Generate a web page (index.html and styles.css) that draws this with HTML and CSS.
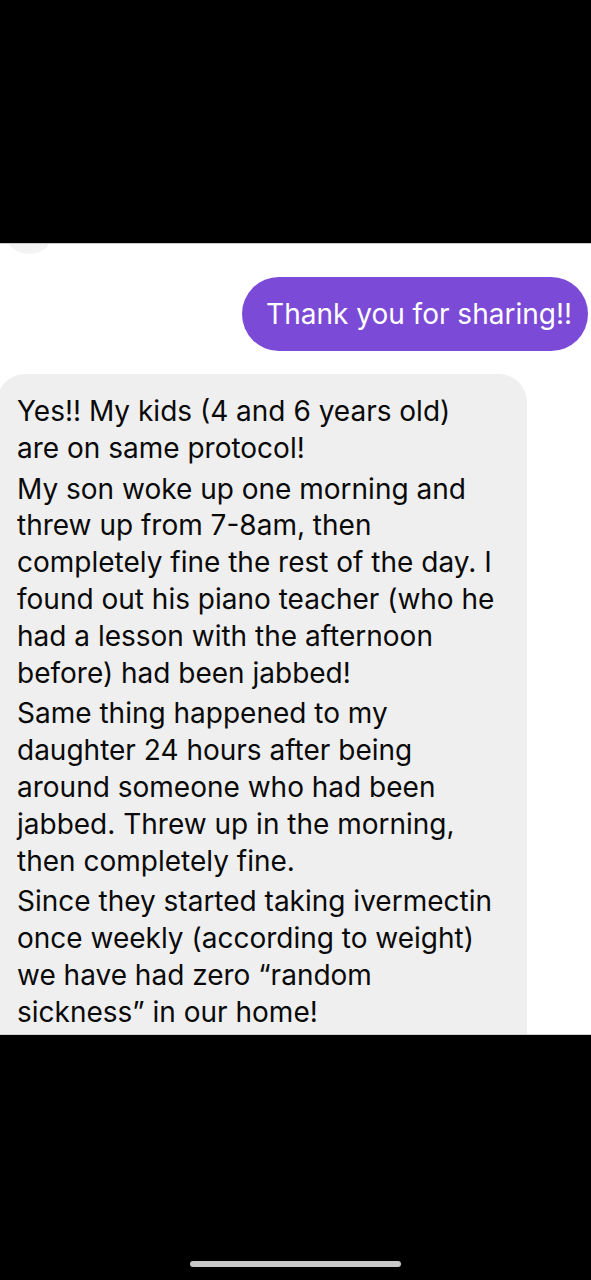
FILE: index.html
```html
<!DOCTYPE html>
<html>
<head>
<meta charset="utf-8">
<link rel="stylesheet" href="styles.css">
</head>
<body>
<div class="screen">
  <div class="top-black"></div>
  <div class="chat">
    <div class="prev-tail"></div>
    <div class="row row-out">
      <div class="bubble out">Thank you for sharing!!</div>
    </div>
    <div class="row row-in">
      <div class="bubble in">
        <p>Yes!! My kids (4 and 6 years old)<br>are on same protocol!</p>
        <p>My son woke up one morning and<br>threw up from 7-8am, then<br>completely fine the rest of the day. I<br>found out his piano teacher (who he<br>had a lesson with the afternoon<br>before) had been jabbed!</p>
        <p>Same thing happened to my<br>daughter 24 hours after being<br>around someone who had been<br>jabbed. Threw up in the morning,<br>then completely fine.</p>
        <p>Since they started taking ivermectin<br>once weekly (according to weight)<br>we have had zero “random<br>sickness” in our home!</p>
      </div>
    </div>
  </div>
  <div class="bottom-black">
    <div class="home-indicator"></div>
  </div>
</div>
</body>
</html>
```

FILE: styles.css
```css
html, body {
  margin: 0;
  padding: 0;
  background: #000;
}
.screen {
  width: 591px;
  height: 1280px;
  display: flex;
  flex-direction: column;
  overflow: hidden;
  font-family: Inter, "Liberation Sans", sans-serif;
}
.top-black {
  height: 243px;
  background: #000;
  flex: none;
}
.chat {
  height: 790px;
  flex: none;
  background: #fff;
  border-top: 1px solid #c8c8c8;
  border-bottom: 1px solid #d0d0d0;
  position: relative;
  overflow: hidden;
}
.prev-tail {
  position: absolute;
  left: 8px;
  top: -20px;
  width: 42px;
  height: 30px;
  border-radius: 50%;
  background: #f3f3f3;
}
.row {
  display: flex;
}
.row-out {
  justify-content: flex-end;
  padding-top: 33px;
  margin-right: 3px;
}
.row-in {
  padding-top: 23px;
  margin-left: -3px;
}
.bubble.out {
  background: #7b4ad6;
  color: #fff;
  height: 74px;
  box-sizing: border-box;
  border-radius: 37px;
  padding: 0 16px 0 24px;
  display: flex;
  align-items: center;
  font-size: 28px;
  white-space: nowrap;
}
.bubble.in {
  background: #efefef;
  color: #0a0a0a;
  width: 530px;
  box-sizing: border-box;
  border-radius: 28px;
  padding: 19px 0 40px 20px;
  font-size: 28px;
  line-height: 36.8px;
  white-space: nowrap;
}
.bubble.in p {
  margin: 0 0 4px 0;
}
.bottom-black {
  flex: 1;
  background: #000;
  position: relative;
}
.home-indicator {
  position: absolute;
  left: 190px;
  top: 226px;
  width: 211px;
  height: 6px;
  border-radius: 3px;
  background: #c9c9c9;
}
```
